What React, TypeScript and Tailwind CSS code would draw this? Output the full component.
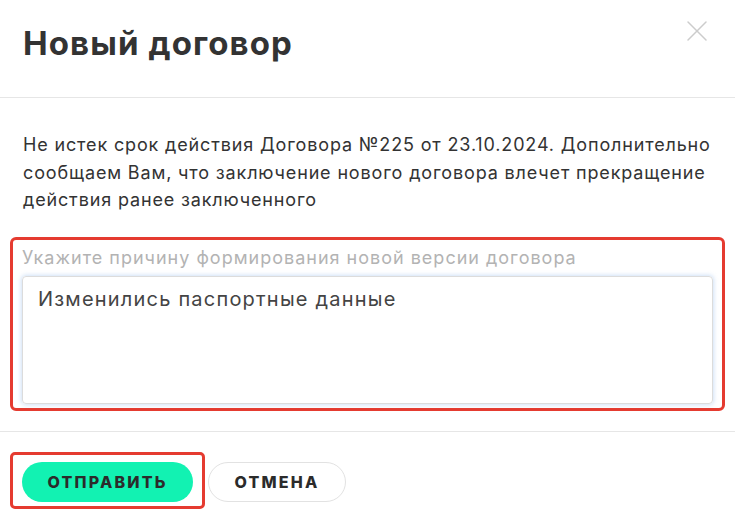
import { X } from 'lucide-react'

export default function App() {
    return (
        <div className="w-[735px] h-[523px] bg-white overflow-hidden font-['Inter',sans-serif] text-[#333]">
            <header className="h-[98px] border-b border-[#e6e6e6] flex items-start justify-between pl-[23px] pr-[20px]">
                <h1 className="mt-[22px] text-[33px] leading-[42px] font-bold tracking-[1.1px] text-[#333]">Новый договор</h1>
                <button className="mt-[13px] text-[#cccccc]" title="Закрыть">
                    <X size={36} strokeWidth={1} />
                </button>
            </header>

            <div className="px-[23px] pt-[33px]">
                <p className="text-[18px] leading-[27.5px] tracking-[0.85px] text-[#333]">
                    Не истек срок действия Договора №225 от 23.10.2024. Дополнительно сообщаем Вам, что заключение нового договора влечет прекращение действия ранее заключенного
                </p>
            </div>

            <div className="mx-[10px] mt-[23px] h-[174px] border-[3px] border-[#e53b30] rounded-[6px] px-[9px] pt-[6px]">
                <label className="block text-[18px] leading-[24px] tracking-[1px] text-[#b3b3b3]">Укажите причину формирования новой версии договора</label>
                <div className="mt-[6px] h-[128px] rounded-[4px] border border-[#dcdcdc] shadow-[0_0_4px_1px_rgba(120,170,230,0.35)] px-[15px] pt-[9px]">
                    <div className="text-[20px] leading-[26px] tracking-[1.2px] text-[#444]">Изменились паспортные данные</div>
                </div>
            </div>

            <div className="mt-[20px] border-t border-[#e6e6e6] px-[10px] pt-[20px] flex items-start gap-[3px]">
                <div className="border-[3px] border-[#e53b30] rounded-[5px] pt-[7px] pb-[4px] px-[9px]">
                    <button className="block h-[40px] w-[171px] rounded-full bg-[#12f2b2] text-[16px] font-extrabold tracking-[2.2px] text-[#2b2b2b]">ОТПРАВИТЬ</button>
                </div>
                <button className="mt-[10px] h-[40px] w-[138px] rounded-full border border-[#e2e2e2] bg-white text-[16px] font-extrabold tracking-[2.2px] text-[#2b2b2b]">ОТМЕНА</button>
            </div>
        </div>
    )
}
